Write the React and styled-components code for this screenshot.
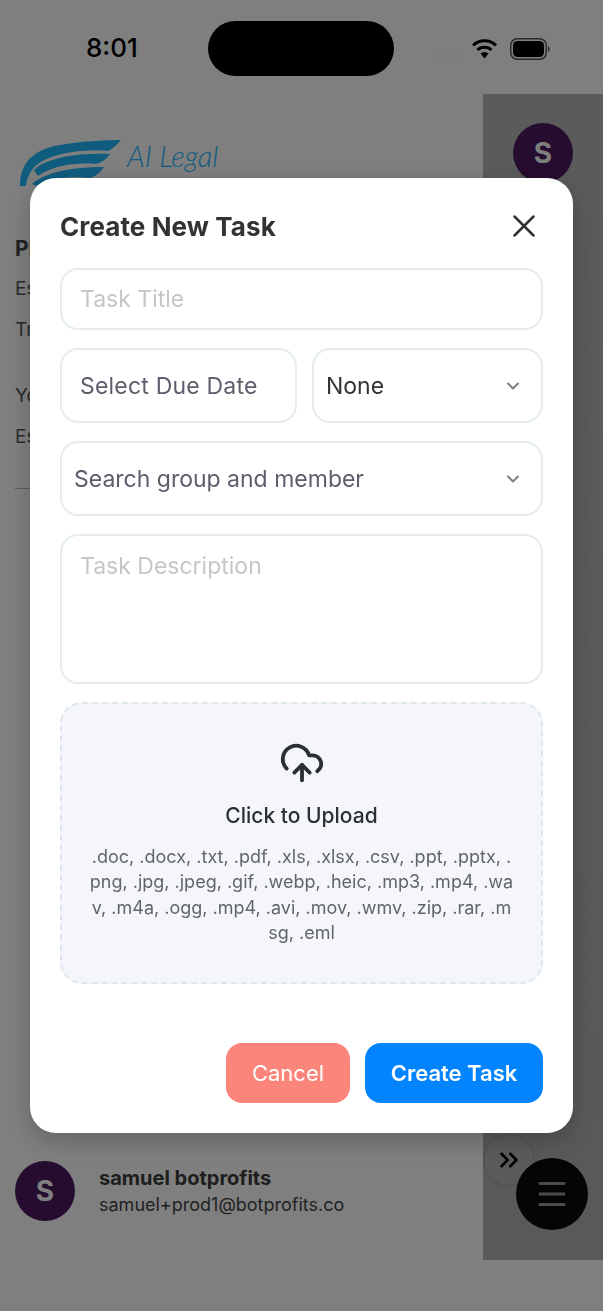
import React from 'react';
import styled, { createGlobalStyle } from 'styled-components';
import { X, ChevronDown, CloudUpload, ChevronsRight, Menu } from 'lucide-react';

const GlobalStyle = createGlobalStyle`
    html, body {
        margin: 0;
        padding: 0;
        background: #fff;
    }
    * {
        box-sizing: border-box;
    }
`;

const display = `Inter, "Noto Sans", sans-serif`;

const Page = styled.div`
    width: 603px;
    height: 1311px;
    overflow: hidden;
    display: flex;
    flex-direction: column;
    font-family: ${display};
    background: #fff;
`;

const StatusBar = styled.div`
    height: 94px;
    flex: none;
    display: flex;
    align-items: flex-start;
    padding: 21px 53px 0 86px;
`;

const Clock = styled.div`
    width: 122px;
    margin-top: 12px;
    font-size: 26px;
    line-height: 30px;
    font-weight: 500;
    color: #000;
`;

const Island = styled.div`
    width: 187px;
    height: 55px;
    border-radius: 28px;
    background: #000;
`;

const StatusIcons = styled.div`
    display: flex;
    align-items: center;
    margin: 15px 0 0 37px;
    height: 26px;
`;

const Dots = styled.div`
    display: flex;
    gap: 3px;
    margin-top: 13px;
    margin-right: 12px;
`;

const Dot = styled.span`
    width: 5px;
    height: 5px;
    border-radius: 50%;
    background: #8a8a8a;
    filter: brightness(1.8);
`;

const Main = styled.div`
    height: 1166px;
    flex: none;
    display: flex;
`;

const Sidebar = styled.div`
    width: 483px;
    display: flex;
    flex-direction: column;
    padding: 46px 0 0 15px;
`;

const Logo = styled.div`
    display: flex;
    gap: 6px;
    height: 88px;
    margin-left: 3px;
`;

const LogoText = styled.div`
    font-family: Lato, sans-serif;
    font-style: italic;
    font-weight: 300;
    font-size: 29px;
    line-height: 32px;
    color: #1fb8ff;
`;

const Heading = styled.div`
    font-size: 21px;
    font-weight: 700;
    color: #444;
    line-height: 30px;
    margin-top: 6px;
`;

const InfoLine = styled.div`
    font-size: 19px;
    line-height: 30px;
    color: #555;
    margin-top: ${(p) => p.$gap}px;
`;

const Rule = styled.div`
    height: 1px;
    background: #bbb;
    margin: 36px 0 0 0;
`;

const Profile = styled.div`
    margin-top: auto;
    margin-bottom: 39px;
    display: flex;
    align-items: center;
    gap: 24px;
`;

const Avatar = styled.div`
    width: 60px;
    height: 60px;
    flex: none;
    border-radius: 50%;
    background: #4c185c;
    color: #fff;
    font-size: 28px;
    font-weight: 700;
    display: flex;
    align-items: center;
    justify-content: center;
`;

const ProfileName = styled.div`
    font-size: 20px;
    font-weight: 700;
    color: #3c3c3c;
    line-height: 28px;
`;

const ProfileMail = styled.div`
    font-size: 18px;
    color: #444;
    line-height: 26px;
`;

const RightPanel = styled.div`
    flex: 1;
    position: relative;
    background: linear-gradient(#b6b6b6, #b0b4b4);
    display: flex;
    justify-content: center;
    padding-top: 29px;
`;

const ExpandButton = styled.div`
    position: absolute;
    left: 0;
    top: 1040px;
    width: 52px;
    height: 52px;
    border-radius: 50%;
    border: 1px solid #999;
    background: #b6b6b6;
    display: flex;
    align-items: center;
    justify-content: center;
    color: #000;
`;

const Fab = styled.div`
    position: absolute;
    left: 33px;
    top: 1064px;
    width: 72px;
    height: 72px;
    border-radius: 50%;
    background: #0a0a0a;
    display: flex;
    align-items: center;
    justify-content: center;
    color: #999;
`;

const Overlay = styled.div`
    position: fixed;
    top: 0;
    left: 0;
    width: 603px;
    height: 1311px;
    background: rgba(0, 0, 0, 0.5);
    display: flex;
    justify-content: center;
    padding-top: 178px;
`;

const Modal = styled.div`
    width: 543px;
    height: 955px;
    background: #fff;
    border-radius: 26px;
    padding: 30px;
    box-shadow: 0 8px 24px rgba(0, 0, 0, 0.22);
    display: flex;
    flex-direction: column;
`;

const ModalHeader = styled.div`
    height: 36px;
    margin-bottom: 24px;
    display: flex;
    align-items: center;
    justify-content: space-between;
    color: #333;
`;

const Title = styled.div`
    font-size: 26px;
    font-weight: 700;
    color: #333;
    letter-spacing: 0.1px;
`;

const Field = styled.div`
    height: ${(p) => p.$height}px;
    flex: ${(p) => (p.$grow ? '1 1 0' : 'none')};
    border: 2px solid #e5edef;
    border-radius: 18px;
    margin-bottom: 18px;
    display: flex;
    align-items: ${(p) => (p.$top ? 'flex-start' : 'center')};
    justify-content: space-between;
    padding: ${(p) => (p.$top ? '14px 18px' : `0 18px`)};
    padding-left: ${(p) => p.$left || 18}px;
    padding-right: ${(p) => p.$right || 18}px;
`;

const FieldRow = styled.div`
    display: flex;
    gap: 15px;
`;

const FieldText = styled.span`
    font-family: ${display};
    font-size: 23px;
    line-height: 32px;
    color: ${(p) => p.$color};
    letter-spacing: ${(p) => p.$spacing || 0}px;
`;

const UploadBox = styled.div`
    height: 282px;
    border: 2px dashed #dde7ea;
    border-radius: 22px;
    background: #f4f6fb;
    display: flex;
    flex-direction: column;
    align-items: center;
    padding: 36px 28px 0;
    color: #2b2f36;
`;

const UploadTitle = styled.div`
    font-size: 21px;
    font-weight: 500;
    line-height: 30px;
    color: #2b2f36;
    margin-top: 15px;
`;

const UploadHint = styled.div`
    width: 425px;
    font-size: 18px;
    line-height: 25.3px;
    color: #62656c;
    text-align: center;
    margin-top: 13px;
    word-break: break-all;
`;

const Actions = styled.div`
    margin-top: auto;
    display: flex;
    justify-content: flex-end;
    gap: 15px;
`;

const ActionButton = styled.div`
    width: ${(p) => p.$width}px;
    height: 60px;
    border-radius: 16px;
    background: ${(p) => p.$bg};
    color: #fff;
    font-size: 22px;
    font-weight: ${(p) => p.$weight};
    display: flex;
    align-items: center;
    justify-content: center;
`;

function WifiIcon() {
    return (
        <svg width="25" height="20" viewBox="0 0 25 20">
            <path d="M1 6.5 a16.5 16.5 0 0 1 23 0" fill="none" stroke="#000" strokeWidth="3" />
            <path d="M5.5 11 a10 10 0 0 1 14 0" fill="none" stroke="#000" strokeWidth="3" />
            <path d="M8.5 14.5 L12.5 19.5 L16.5 14.5 a6 6 0 0 0 -8 0z" fill="#000" />
        </svg>
    );
}

function BatteryIcon() {
    return (
        <svg width="40" height="22" viewBox="0 0 40 22">
            <rect x="0.75" y="0.75" width="35.5" height="20.5" rx="6.5" fill="none" stroke="#555" strokeWidth="1.5" />
            <rect x="3" y="3" width="31" height="16" rx="4.5" fill="#000" />
            <path d="M38 8 a3.5 3.5 0 0 1 0 6z" fill="#555" />
        </svg>
    );
}

function WingLogo() {
    return (
        <svg width="103" height="46" viewBox="0 0 103 46">
            <path d="M2 46 C2 24 14 8 48 4 C68 1 88 0 103 0 C98 6 94 9 90 11 C60 9 26 14 14 30 C10 36 8 42 8 46z" fill="#1fb8ff" />
            <path d="M16 30 C30 17 60 13 92 14 C88 20 84 22 78 24 C56 22 34 26 20 36z" fill="#1fb8ff" />
            <path d="M14 44 C28 32 54 27 86 27 C82 33 78 36 72 38 C52 36 32 38 18 46z" fill="#1fb8ff" />
        </svg>
    );
}

export default function App() {
    return (
        <Page>
            <GlobalStyle />
            <StatusBar>
                <Clock>8:01</Clock>
                <Island />
                <StatusIcons>
                    <Dots>
                        <Dot /><Dot /><Dot /><Dot />
                    </Dots>
                    <WifiIcon />
                    <span style={{ width: 13 }} />
                    <BatteryIcon />
                </StatusIcons>
            </StatusBar>
            <Main>
                <Sidebar>
                    <Logo>
                        <WingLogo />
                        <LogoText>
                            AI Legal
                            <br />
                            Assistant
                        </LogoText>
                    </Logo>
                    <Heading>Plan</Heading>
                    <InfoLine $gap={10}>Estimated</InfoLine>
                    <InfoLine $gap={11}>Tracked</InfoLine>
                    <InfoLine $gap={36}>Your plan</InfoLine>
                    <InfoLine $gap={11}>Estimated</InfoLine>
                    <Rule />
                    <Profile>
                        <Avatar>S</Avatar>
                        <div>
                            <ProfileName>samuel botprofits</ProfileName>
                            <ProfileMail>samuel+prod1@botprofits.co</ProfileMail>
                        </div>
                    </Profile>
                </Sidebar>
                <RightPanel>
                    <Avatar>S</Avatar>
                    <ExpandButton>
                        <ChevronsRight size={30} strokeWidth={2} />
                    </ExpandButton>
                    <Fab>
                        <Menu size={36} strokeWidth={2} />
                    </Fab>
                </RightPanel>
            </Main>
            <Overlay>
                <Modal>
                    <ModalHeader>
                        <Title>Create New Task</Title>
                        <X size={38} strokeWidth={1.6} />
                    </ModalHeader>
                    <Field $height={62}>
                        <FieldText $color="#c6c6c6">Task Title</FieldText>
                    </Field>
                    <FieldRow>
                        <Field $height={75} $grow>
                            <FieldText $color="#5c5f6b" $spacing={0.2}>Select Due Date</FieldText>
                        </Field>
                        <Field $height={75} $grow $left={12} $right={18}>
                            <FieldText $color="#333">None</FieldText>
                            <ChevronDown size={20} color="#808080" strokeWidth={2.5} />
                        </Field>
                    </FieldRow>
                    <Field $height={75} $left={12} $right={18}>
                        <FieldText $color="#5c5f6b">Search group and member</FieldText>
                        <ChevronDown size={20} color="#808080" strokeWidth={2.5} />
                    </Field>
                    <Field $height={150} $top>
                        <FieldText $color="#c6c6c6">Task Description</FieldText>
                    </Field>
                    <UploadBox>
                        <CloudUpload size={46} strokeWidth={2} />
                        <UploadTitle>Click to Upload</UploadTitle>
                        <UploadHint>
                            .doc, .docx, .txt, .pdf, .xls, .xlsx, .csv, .ppt, .pptx, .png, .jpg, .jpeg, .gif, .webp, .heic, .mp3, .mp4, .wav, .m4a, .ogg, .mp4, .avi, .mov, .wmv, .zip, .rar, .msg, .eml
                        </UploadHint>
                    </UploadBox>
                    <Actions>
                        <ActionButton $width={124} $bg="#fc857b" $weight={400}>Cancel</ActionButton>
                        <ActionButton $width={178} $bg="#0284fe" $weight={600}>Create Task</ActionButton>
                    </Actions>
                </Modal>
            </Overlay>
        </Page>
    );
}
